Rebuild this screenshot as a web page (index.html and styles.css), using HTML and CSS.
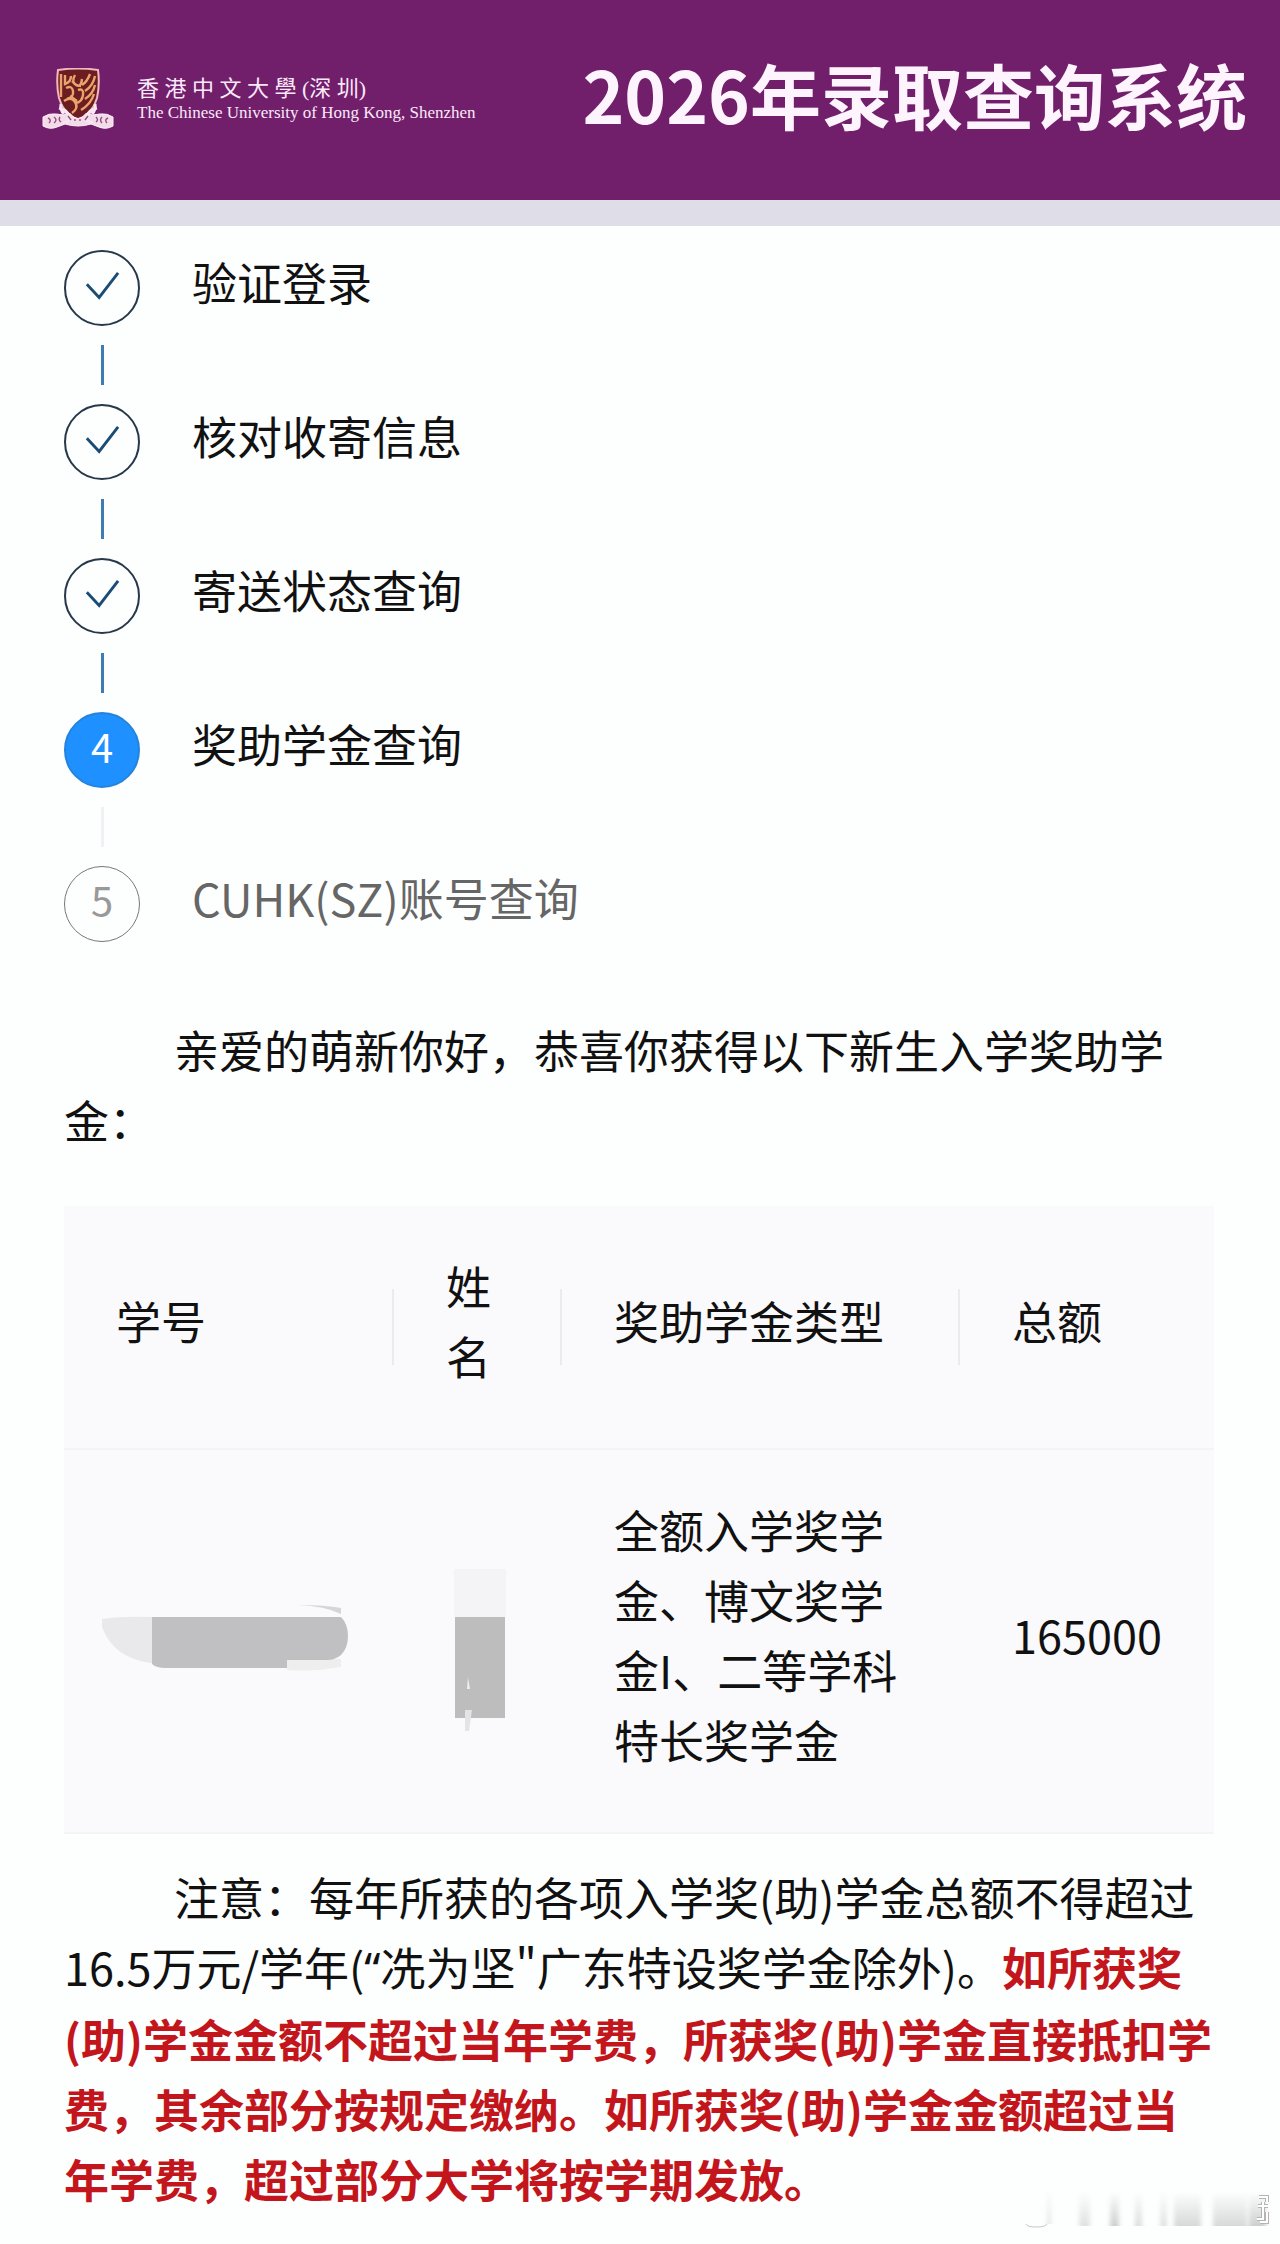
FILE: index.html
```html
<!DOCTYPE html>
<html lang="zh-CN">
<head>
  <meta charset="UTF-8" />
  <meta name="viewport" content="width=device-width, initial-scale=1.0" />
  <title>2026年录取查询系统</title>
  <link rel="stylesheet" href="styles.css">
</head>
<body>
  <header class="header">
    <div class="brand">
      <svg class="crest" viewBox="0 0 72 62" aria-hidden="true">
        <path d="M16 2q20-3 40 0q2 14-1 28q-4 15-19 22q-15-7-19-22q-3-14-1-28z" fill="#6b1d22" stroke="#f2b9bd" stroke-width="2"/>
        <path d="M19 6v23M23 7v9q6-2 6-8M24 20q6-3 7 3t-6 8M22 33q7-5 11 1t-3 11M33 7q-4 7 1 10t6-6M36 22q6-2 5 5t-7 8M48 6q-3 8-8 11M53 8q-2 10-10 15M53 17q-2 9-10 14M52 26q-3 10-13 16M30 13q4 5 9 5M28 28l7 5" fill="none" stroke="#eaa36a" stroke-width="2.4"/>
        <path d="M1 49q6-4 13-3l8 1q5-5 9 2q5 3 10 0q4-7 9-2l8-1q7-1 13 3v9q-7 4-14 1l-8-3q-13 4-26 0l-8 3q-7 3-14-1z" fill="#f3dbea" stroke="#fff1fa" stroke-width="1"/>
        <path d="M17 40q8 2 10 8t-6 7M55 40q-8 2-10 8t6 7M19 36q-1 6 3 10M53 36q1 6-3 10" fill="none" stroke="#f8e6f2" stroke-width="3"/>
        <path d="M6 50q4 2 1 5m5-6q4 3 0 6m6-6q-2 3 1 5M54 49q3 3 0 5m6-5q-3 3 0 6m6-5q-4 2-1 5M26 48l3 4m4-1v2m5-2v2m8-5l-3 4" fill="none" stroke="#8d5279" stroke-width="1.4"/>
      </svg>
      <div class="brand-name">
        <span class="brand-cn">香 港 中 文 大 學 (深 圳)</span>
        <span class="brand-en">The Chinese University of Hong Kong, Shenzhen</span>
      </div>
    </div>
    <h1>2026年录取查询系统</h1>
  </header>

  <main class="content">
    <ol class="steps">
      <li class="step done">
        <div class="step-mark">
          <svg class="circle" viewBox="0 0 76 76" aria-label="已完成"><path d="M22 34l13 14 20-26" /></svg>
        </div>
        <span class="step-title">验证登录</span>
      </li>
      <li class="step done">
        <div class="step-mark">
          <svg class="circle" viewBox="0 0 76 76" aria-label="已完成"><path d="M22 34l13 14 20-26" /></svg>
        </div>
        <span class="step-title">核对收寄信息</span>
      </li>
      <li class="step done">
        <div class="step-mark">
          <svg class="circle" viewBox="0 0 76 76" aria-label="已完成"><path d="M22 34l13 14 20-26" /></svg>
        </div>
        <span class="step-title">寄送状态查询</span>
      </li>
      <li class="step active">
        <div class="step-mark"><span class="circle">4</span></div>
        <span class="step-title">奖助学金查询</span>
      </li>
      <li class="step waiting">
        <div class="step-mark"><span class="circle">5</span></div>
        <span class="step-title">CUHK(SZ)账号查询</span>
      </li>
    </ol>

    <p class="intro">亲爱的萌新你好，恭喜你获得以下新生入学奖助学金：</p>

    <table class="award-table">
      <thead>
        <tr>
          <th class="col-id">学号</th>
          <th class="col-name">姓名</th>
          <th class="col-type">奖助学金类型</th>
          <th>总额</th>
        </tr>
      </thead>
      <tbody>
        <tr>
          <td class="masked">
            <!-- student number, covered -->
            <svg width="250" height="72" viewBox="0 0 250 72" aria-hidden="true">
              <path d="M2 14q20-3 50-2v46q-38-4-50-36z" fill="#e9e8ea"/>
              <path d="M187 54h54v8q-27 5-54 3z" fill="#eeeeef"/>
              <path d="M198 0q28 0 43 3v6q-16-8-43-9z" fill="#d6d5d7"/>
              <path d="M52 12h189q7 7 7 19t-7 19q-6 5-14 5h-40v8H66q-10 0-14-4z" fill="#c0bfc1"/>
            </svg>
          </td>
          <td class="masked masked-name">
            <!-- name, covered -->
            <svg width="52" height="188" viewBox="0 0 52 188" aria-hidden="true">
              <path d="M0 22h52v48H0z" fill="#f4f4f6"/>
              <path d="M1 70h50v101H1z" fill="#bdbdbe"/>
              <path d="M13 142l1-12 2 12z" fill="#eeeeef"/>
              <path d="M11 163h7l-3 21h-4z" fill="#e4e4e5"/>
            </svg>
          </td>
          <td>全额入学奖学金、博文奖学金I、二等学科特长奖学金</td>
          <td>165000</td>
        </tr>
      </tbody>
    </table>

    <p class="note">注意：每年所获的各项入学奖(助)学金总额不得超过16.5万元/学年(<span class="quote">“</span>冼为坚"广东特设奖学金除外)。<strong>如所获奖(助)学金金额不超过当年学费，所获奖(助)学金直接抵扣学费，其余部分按规定缴纳。如所获奖(助)学金金额超过当年学费，超过部分大学将按学期发放。</strong></p>
  </main>

  <!-- faded corner mark -->
  <svg class="corner-mark" width="250" height="44" viewBox="0 0 250 44" aria-hidden="true">
    <defs>
      <linearGradient id="fade" x1="0" y1="0" x2="0" y2="1">
        <stop offset="0" stop-color="#bbb" stop-opacity="0"/>
        <stop offset="1" stop-color="#bbb" stop-opacity="0.7"/>
      </linearGradient>
      <filter id="soft" x="-5%" y="-5%" width="110%" height="110%"><feGaussianBlur stdDeviation="2 0"/></filter>
    </defs>
    <g fill="url(#fade)" filter="url(#soft)">
      <path d="M25 2h4v34h-4z" opacity=".5"/>
      <path d="M57 4h11v34H57z" opacity=".6"/>
      <path d="M88 4h9v34h-9z"/>
      <path d="M113 4h7v34h-7z" opacity=".7"/>
      <path d="M138 4h7v34h-7z" opacity=".6"/>
      <path d="M152 4h27v34h-27z" opacity=".8"/>
      <path d="M191 4h34v34h-34z" opacity=".8"/>
      <path d="M227 4h17v34h-17z"/>
    </g>
    <path d="M4 36q1 3 10 3t11-3" fill="none" stroke="#c8c8c8"/>
    <path d="M237 9h8v5M236 18h10M241 14v17h-6M245 24v10h-7" fill="none" stroke="#b4b4b4" stroke-width="4"/>
    <path d="M237 9h8v5M236 18h10M241 14v17h-6M245 24v10h-7" fill="none" stroke="#fff" stroke-width="2"/>
  </svg>
</body>
</html>
```

FILE: styles.css
```css
* { box-sizing: border-box; }
body {
  margin: 0;
  position: relative;
  min-height: 100vh;
  font-family: "Noto Sans CJK SC", sans-serif;
  font-size: 45px;
  line-height: 70px;
  color: #111;
  background-color: #fdfefe;
}

.header {
  display: flex;
  justify-content: space-between;
  align-items: center;
  height: 226px;
  padding: 0 33px 14px 42px;
  background-color: #711e6b;
  border-bottom: 26px solid #dfdee8;
}
.brand {
  display: flex;
  align-items: center;
  gap: 23px;
  padding-top: 12px;
}
.crest {
  width: 72px;
  height: 62px;
}
.brand-name {
  display: flex;
  flex-direction: column;
  color: #fbe9fa;
}
.brand-cn {
  font-family: "Liberation Serif", "Noto Sans CJK TC", serif;
  font-size: 22px;
  line-height: 28px;
}
.brand-en {
  font-family: "Liberation Serif", serif;
  font-size: 17px;
  line-height: 20px;
}
h1 {
  margin: 0;
  font-size: 71px;
  line-height: 100px;
  font-weight: 700;
  color: #fdf4fd;
  white-space: nowrap;
}

.content {
  padding: 24px 66px 24px 64px;
}

.steps {
  list-style: none;
  margin: 0;
  padding: 0;
}
.step {
  display: flex;
  align-items: flex-start;
  gap: 52px;
}
.step-title {
  line-height: 64px;
}
.step-mark {
  display: flex;
  flex-direction: column;
  align-items: center;
}
.circle {
  width: 76px;
  height: 76px;
  border: 2px solid #26384a;
  border-radius: 50%;
  font-size: 40px;
  line-height: 64px;
  text-align: center;
}
.circle path {
  fill: none;
  stroke: #1b4c76;
  stroke-width: 3;
}
/* connector to the next step */
.step:not(:last-child) .step-mark::after {
  content: "";
  width: 3px;
  height: 40px;
  margin: 19px 0;
  background-color: #3f7db0;
}
.step.active .circle {
  color: white;
  background-color: #1e90ff;
  border-color: #2484dd;
}
.step.active .step-mark::after {
  background-color: #f1f0f4;
}
.step.waiting {
  color: #666;
}
.step.waiting .circle {
  color: #999;
  border: 1px solid #777;
}

.intro,
.note {
  margin: 0;
  text-indent: 110px;
}
.intro {
  margin: 73px 0 51px;
}

.award-table {
  width: 100%;
  table-layout: fixed;
  border-collapse: collapse;
  background-color: #faf9fc;
}
th,
td {
  padding: 45px 52px 57px;
  text-align: left;
  font-weight: 400;
  border-bottom: 2px solid #f4f4f7;
}
th {
  background: linear-gradient(#ebeaee, #ebeaee) no-repeat right center / 2px 76px;
}
th:last-child { background: none; }
.col-id { width: 330px; }
.col-name { width: 168px; }
.col-type { width: 398px; }
.masked { padding: 0 0 0 36px; }
.masked-name { padding-left: 60px; }
.masked svg { display: block; }

.note {
  margin-top: 28px;
}
.note strong {
  font-weight: 700;
  color: #c3161c;
}
.quote {
  font-family: "Noto Sans", sans-serif;
}

.corner-mark {
  position: absolute;
  right: 8px;
  bottom: 12px;
}
```
